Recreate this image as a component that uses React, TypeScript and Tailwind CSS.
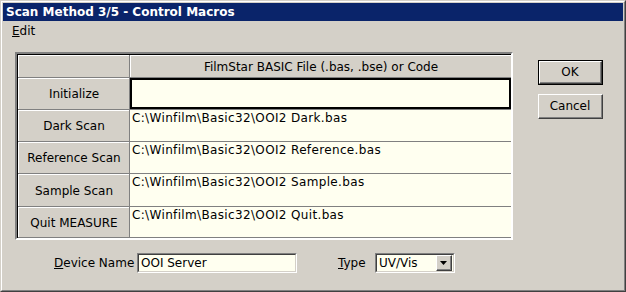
import React from 'react';

const font = { fontFamily: '"DejaVu Sans", Verdana, sans-serif' };

const rows: { label: string; value: string }[] = [
  { label: 'Dark Scan', value: 'C:\\Winfilm\\Basic32\\OOI2 Dark.bas' },
  { label: 'Reference Scan', value: 'C:\\Winfilm\\Basic32\\OOI2 Reference.bas' },
  { label: 'Sample Scan', value: 'C:\\Winfilm\\Basic32\\OOI2 Sample.bas' },
  { label: 'Quit MEASURE', value: 'C:\\Winfilm\\Basic32\\OOI2 Quit.bas' },
];

const HeaderCell: React.FC<{ children?: React.ReactNode }> = ({ children }) => (
  <div className="flex items-center justify-center border-t border-l border-white bg-[#d4d0c8] text-[12px] text-black">
    {children}
  </div>
);

const Button: React.FC<{ label: string; isDefault?: boolean }> = ({ label, isDefault }) => (
  <div className={`h-[25px] w-[65px] ${isDefault ? 'border border-black' : ''}`}>
    <div className="h-full w-full border border-t-white border-l-white border-r-[#404040] border-b-[#404040]">
      <div className="flex h-full w-full items-center justify-center border-r border-b border-r-[#808080] border-b-[#808080] text-[12px] text-black">
        {label}
      </div>
    </div>
  </div>
);

const Sunken: React.FC<{ className?: string; children?: React.ReactNode }> = ({ className, children }) => (
  <div className={`border border-t-[#808080] border-l-[#808080] border-r-white border-b-white ${className ?? ''}`}>
    <div className="h-full w-full border border-t-[#404040] border-l-[#404040] border-r-[#d4d0c8] border-b-[#d4d0c8] bg-[#fffff0]">
      {children}
    </div>
  </div>
);

export default function App() {
  return (
    <div
      className="h-[292px] w-[626px] border border-t-[#d4d0c8] border-l-[#d4d0c8] border-r-[#404040] border-b-[#404040] bg-[#d4d0c8]"
      style={font}
    >
      <div className="flex h-full w-full flex-col border border-t-white border-l-white border-r-[#808080] border-b-[#808080] p-px">
        {/* title bar */}
        <div className="flex h-[18px] items-center bg-[#0a246a] pl-[3px] text-[12px] font-bold text-white">
          Scan Method 3/5 - Control Macros
        </div>

        {/* menu */}
        <div className="flex h-[19px] items-center pl-[9px] text-[12px] text-black">
          <span>
            <span className="underline">E</span>dit
          </span>
        </div>

        {/* body */}
        <div className="flex pt-[12px] pl-[12px]">
          <div className="border-2 border-t-[#808080] border-l-[#808080] border-r-white border-b-white">
            <div className="grid h-[184px] w-[494px] grid-cols-[111px_1fr] grid-rows-[22px_31px_31px_31px_32px_30px] gap-px border-t border-l border-t-black border-l-black bg-[#808080]">
              <HeaderCell />
              <HeaderCell>FilmStar BASIC File (.bas, .bse) or Code</HeaderCell>

              <HeaderCell>Initialize</HeaderCell>
              <div className="border-2 border-black bg-[#fffff0]" />

              {rows.map((r) => (
                <React.Fragment key={r.label}>
                  <HeaderCell>{r.label}</HeaderCell>
                  <div className="bg-[#fffff0] pl-[2px] pt-px text-[12px] leading-[14px] tracking-[0.35px] text-black">
                    {r.value}
                  </div>
                </React.Fragment>
              ))}
            </div>
          </div>

          <div className="ml-[25px] mt-[8px] flex flex-col gap-[9px]">
            <Button label="OK" isDefault />
            <Button label="Cancel" />
          </div>
        </div>

        {/* bottom fields */}
        <div className="mt-[13px] flex items-center text-[12px] text-black">
          <span className="ml-[51px] w-[83px]">
            <span className="underline">D</span>evice Name
          </span>
          <Sunken className="h-[20px] w-[160px]">
            <div className="pl-[2px] leading-[16px]">OOI Server</div>
          </Sunken>
          <span className="ml-[41px] w-[37px]">
            <span className="underline">T</span>ype
          </span>
          <Sunken className="h-[20px] w-[80px]">
            <div className="flex h-full items-center justify-between">
              <span className="pl-[2px]">UV/Vis</span>
              <div className="mr-px h-[16px] w-[16px] border border-t-white border-l-white border-r-[#404040] border-b-[#404040] bg-[#d4d0c8]">
                <div className="flex h-full w-full items-center justify-center border-r border-b border-r-[#808080] border-b-[#808080]">
                  <svg width="7" height="4" viewBox="0 0 7 4">
                    <path d="M0 0h7L3.5 4z" fill="black" />
                  </svg>
                </div>
              </div>
            </div>
          </Sunken>
        </div>
      </div>
    </div>
  );
}
